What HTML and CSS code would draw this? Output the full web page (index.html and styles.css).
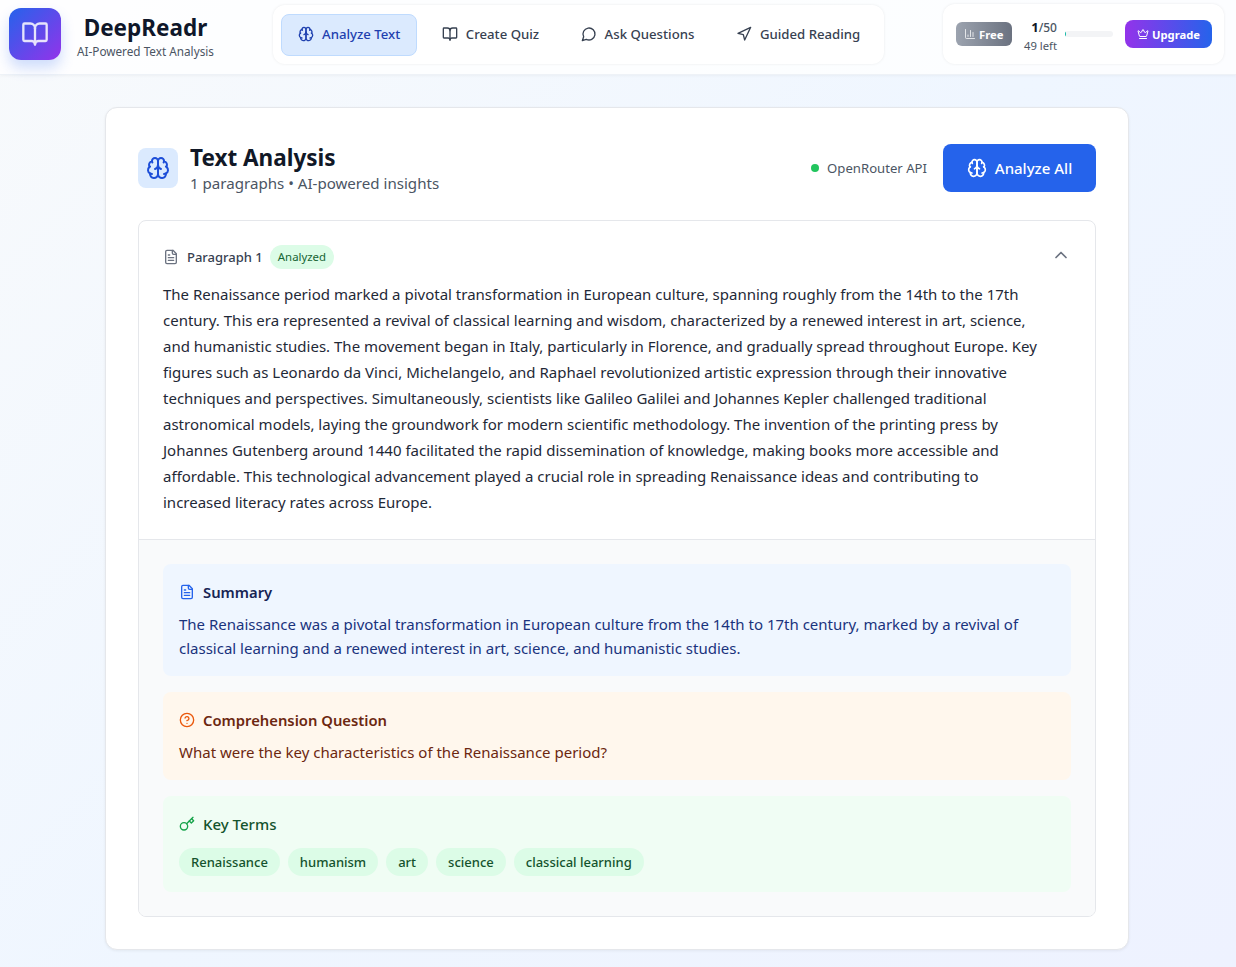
FILE: index.html
```html
<!DOCTYPE html>
<html lang="en">
<head>
	<meta charset="UTF-8">
	<meta name="viewport" content="width=device-width, initial-scale=1.0">
	<title>DeepReadr</title>
	<link rel="stylesheet" href="styles.css">
</head>
<body>
	<svg class="sprite" xmlns="http://www.w3.org/2000/svg">
		<symbol id="i-brain" viewBox="0 0 24 24"><path d="M12 5a3 3 0 1 0-5.997.125 4 4 0 0 0-2.526 5.77 4 4 0 0 0 .556 6.588A4 4 0 1 0 12 18Z"/><path d="M12 5a3 3 0 1 1 5.997.125 4 4 0 0 1 2.526 5.77 4 4 0 0 1-.556 6.588A4 4 0 1 1 12 18Z"/><path d="M15 13a4.5 4.5 0 0 1-3-4 4.5 4.5 0 0 1-3 4"/><path d="M17.599 6.5a3 3 0 0 0 .399-1.375"/><path d="M6.003 5.125A3 3 0 0 0 6.401 6.5"/><path d="M3.477 10.896a4 4 0 0 1 .585-.396"/><path d="M19.938 10.5a4 4 0 0 1 .585.396"/><path d="M6 18a4 4 0 0 1-1.967-.516"/><path d="M19.967 17.484A4 4 0 0 1 18 18"/></symbol>
		<symbol id="i-book" viewBox="0 0 24 24"><path d="M12 7v14"/><path d="M3 18a1 1 0 0 1-1-1V4a1 1 0 0 1 1-1h5a4 4 0 0 1 4 4 4 4 0 0 1 4-4h5a1 1 0 0 1 1 1v13a1 1 0 0 1-1 1h-6a3 3 0 0 0-3 3 3 3 0 0 0-3-3z"/></symbol>
		<symbol id="i-file" viewBox="0 0 24 24"><path d="M15 2H6a2 2 0 0 0-2 2v16a2 2 0 0 0 2 2h12a2 2 0 0 0 2-2V7Z"/><path d="M14 2v4a2 2 0 0 0 2 2h4"/><path d="M10 9H8"/><path d="M16 13H8"/><path d="M16 17H8"/></symbol>
	</svg>

	<header class="topbar">
		<div class="brand">
			<div class="brand-logo"><svg class="icon"><use href="#i-book"/></svg></div>
			<div class="brand-text">
				<div class="brand-name">DeepReadr</div>
				<div class="brand-sub">AI-Powered Text Analysis</div>
			</div>
		</div>

		<nav class="nav">
			<a class="nav-item active"><svg class="icon"><use href="#i-brain"/></svg>Analyze Text</a>
			<a class="nav-item"><svg class="icon"><use href="#i-book"/></svg>Create Quiz</a>
			<a class="nav-item"><svg class="icon" viewBox="0 0 24 24"><path d="M7.9 20A9 9 0 1 0 4 16.1L2 22Z"/></svg>Ask Questions</a>
			<a class="nav-item"><svg class="icon" viewBox="0 0 24 24"><polygon points="3 11 22 2 13 21 11 13 3 11"/></svg>Guided Reading</a>
		</nav>

		<div class="usage">
			<span class="plan"><svg class="icon" viewBox="0 0 24 24"><path d="M3 3v16a2 2 0 0 0 2 2h16"/><path d="M18 17V9"/><path d="M13 17V5"/><path d="M8 17v-3"/></svg>Free</span>
			<div class="usage-count">
				<div class="usage-num"><b>1</b>/50</div>
				<div class="usage-left">49 left</div>
			</div>
			<div class="usage-bar"><div class="usage-fill" style="width:2%"></div></div>
			<button class="upgrade"><svg class="icon" viewBox="0 0 24 24"><path d="M11.562 3.266a.5.5 0 0 1 .876 0L15.39 8.87a1 1 0 0 0 1.516.294L21.183 5.5a.5.5 0 0 1 .798.519l-2.834 10.246a1 1 0 0 1-.956.734H5.81a1 1 0 0 1-.957-.734L2.02 6.02a.5.5 0 0 1 .798-.519l4.276 3.664a1 1 0 0 0 1.516-.294z"/><path d="M5 21h14"/></svg>Upgrade</button>
		</div>
	</header>

	<main class="page">
		<section class="card">
			<div class="card-head">
				<div class="head-left">
					<div class="head-icon"><svg class="icon"><use href="#i-brain"/></svg></div>
					<div>
						<h1>Text Analysis</h1>
						<p class="head-sub">1 paragraphs • AI-powered insights</p>
					</div>
				</div>
				<div class="head-right">
					<span class="api"><i class="dot"></i>OpenRouter API</span>
					<button class="analyze-all"><svg class="icon"><use href="#i-brain"/></svg>Analyze All</button>
				</div>
			</div>

			<article class="para">
				<div class="para-main">
					<div class="para-head">
						<div class="para-title">
							<svg class="icon"><use href="#i-file"/></svg>
							<span class="para-label">Paragraph 1</span>
							<span class="badge">Analyzed</span>
						</div>
						<svg class="icon chevron" viewBox="0 0 24 24"><path d="m18 15-6-6-6 6"/></svg>
					</div>
					<p class="para-text">The Renaissance period marked a pivotal transformation in European culture, spanning roughly from the 14th to the 17th century. This era represented a revival of classical learning and wisdom, characterized by a renewed interest in art, science, and humanistic studies. The movement began in Italy, particularly in Florence, and gradually spread throughout Europe. Key figures such as Leonardo da Vinci, Michelangelo, and Raphael revolutionized artistic expression through their innovative techniques and perspectives. Simultaneously, scientists like Galileo Galilei and Johannes Kepler challenged traditional astronomical models, laying the groundwork for modern scientific methodology. The invention of the printing press by Johannes Gutenberg around 1440 facilitated the rapid dissemination of knowledge, making books more accessible and affordable. This technological advancement played a crucial role in spreading Renaissance ideas and contributing to increased literacy rates across Europe.</p>
				</div>

				<div class="para-results">
					<div class="result blue">
						<h3><svg class="icon"><use href="#i-file"/></svg>Summary</h3>
						<p>The Renaissance was a pivotal transformation in European culture from the 14th to 17th century, marked by a revival of classical learning and a renewed interest in art, science, and humanistic studies.</p>
					</div>
					<div class="result orange">
						<h3><svg class="icon" viewBox="0 0 24 24"><circle cx="12" cy="12" r="10"/><path d="M9.09 9a3 3 0 0 1 5.83 1c0 2-3 3-3 3"/><path d="M12 17h.01"/></svg>Comprehension Question</h3>
						<p>What were the key characteristics of the Renaissance period?</p>
					</div>
					<div class="result green">
						<h3><svg class="icon" viewBox="0 0 24 24"><circle cx="7.5" cy="15.5" r="5.5"/><path d="m21 2-9.6 9.6"/><path d="m15.5 7.5 3 3L22 7l-3-3"/></svg>Key Terms</h3>
						<div class="terms">
							<span class="term">Renaissance</span>
							<span class="term">humanism</span>
							<span class="term">art</span>
							<span class="term">science</span>
							<span class="term">classical learning</span>
						</div>
					</div>
				</div>
			</article>
		</section>
	</main>
</body>
</html>
```

FILE: styles.css
```css
* {
	box-sizing: border-box;
}

body {
	margin: 0;
	min-height: 967px;
	font-family: "Noto Sans", sans-serif;
	color: #111827;
	background: linear-gradient(135deg, #f8fafc 0%, #eff6ff 50%, #eef2ff 100%);
}

.sprite {
	display: none;
}

.icon {
	fill: none;
	stroke: currentColor;
	stroke-width: 2;
	stroke-linecap: round;
	stroke-linejoin: round;
	flex-shrink: 0;
	width: 16px;
	height: 16px;
}

/* top bar */
.topbar {
	height: 75px;
	display: flex;
	align-items: flex-start;
	background: rgba(255,255,255,0.8);
	border-bottom: 1px solid #eef2f7;
	box-shadow: 0 1px 3px rgba(0,0,0,0.04);
}

.brand {
	display: flex;
	align-items: center;
	width: 273px;
	padding: 8px 0 0 9px;
}

.brand-logo {
	width: 52px;
	height: 52px;
	border-radius: 12px;
	display: flex;
	align-items: center;
	justify-content: center;
	color: #fff;
	background: linear-gradient(135deg, #2563eb, #9333ea);
	box-shadow: 0 8px 14px rgba(37,99,235,0.22);
}

.brand-logo .icon {
	width: 28px;
	height: 28px;
	opacity: 0.85;
}

.brand-text {
	margin: 2px 0 0 16px;
	text-align: center;
	white-space: nowrap;
}

.brand-name {
	font-size: 22.5px;
	line-height: 30px;
	font-weight: 700;
	color: #0f172a;
}

.brand-sub {
	margin-top: 1px;
	font-size: 11.75px;
	line-height: 14px;
	color: #4b5563;
}

.nav {
	display: flex;
	align-items: center;
	width: 611px;
	height: 59px;
	margin-top: 5px;
	padding: 0 8px;
	background: #fff;
	border-radius: 12px;
	box-shadow: 0 0 3px rgba(0,0,0,0.08);
}

.nav-item {
	display: flex;
	align-items: center;
	gap: 8px;
	height: 42px;
	padding: 0 16px 1px;
	margin-right: 7.5px;
	font-size: 13.2px;
	font-weight: 500;
	color: #374151;
	white-space: nowrap;
	border: 1px solid transparent;
	border-radius: 8px;
}

.nav-item.active {
	color: #1e40af;
	background: #dbeafe;
	border-color: #bfdbfe;
}

.usage {
	display: flex;
	align-items: center;
	width: 281px;
	height: 60px;
	margin: 4px 0 0 59px;
	padding: 0 12px 0 13px;
	background: #fff;
	border-radius: 12px;
	box-shadow: 0 0 3px rgba(0,0,0,0.08);
}

.plan {
	display: flex;
	align-items: center;
	gap: 3px;
	width: 56px;
	height: 24px;
	padding-left: 8px;
	font-size: 11.25px;
	font-weight: 700;
	color: #fff;
	border-radius: 6px;
	background: linear-gradient(90deg, #9ca3af, #6b7280);
}

.plan .icon {
	width: 12px;
	height: 12px;
	stroke-width: 1.5;
}

.usage-count {
	width: 33px;
	margin: 4px 0 0 12px;
	text-align: right;
	font-size: 11.25px;
	line-height: 18px;
	color: #4b5563;
	white-space: nowrap;
}

.usage-num {
	font-size: 12px;
	font-weight: 500;
}

.usage-num b {
	color: #111827;
	font-size: 13px;
}

.usage-bar {
	width: 48px;
	height: 6px;
	margin-left: 8px;
	border-radius: 3px;
	background: #f3f4f6;
	overflow: hidden;
}

.usage-fill {
	height: 100%;
	background: #14b8a6;
}

.upgrade {
	display: flex;
	align-items: center;
	justify-content: center;
	gap: 3px;
	width: 87px;
	height: 28px;
	margin-left: 12px;
	padding: 0;
	font-family: inherit;
	font-size: 11.25px;
	font-weight: 700;
	color: #fff;
	border: 0;
	border-radius: 8px;
	background: linear-gradient(90deg, #9333ea, #2563eb);
}

.upgrade .icon {
	width: 12px;
	height: 12px;
}

/* main card */
.page {
	padding: 32px 107px 16px 105px;
}

.card {
	background: #fff;
	border: 1px solid #e5e7eb;
	border-radius: 12px;
	padding: 36px 32px 32px;
	box-shadow: 0 1px 3px rgba(0,0,0,0.06);
}

.card-head {
	display: flex;
	align-items: flex-start;
	justify-content: space-between;
	margin-bottom: 25px;
}

.head-left {
	display: flex;
	align-items: flex-start;
	gap: 12px;
}

.head-icon {
	width: 40px;
	height: 40px;
	margin-top: 4px;
	border-radius: 8px;
	display: flex;
	align-items: center;
	justify-content: center;
	color: #1d4ed8;
	background: #dbeafe;
}

.head-icon .icon {
	width: 24px;
	height: 24px;
}

h1 {
	margin: 0;
	font-size: 22.5px;
	line-height: 28px;
	font-weight: 700;
	color: #111827;
}

.head-sub {
	margin: -1px 0 0;
	font-size: 15.1px;
	line-height: 24px;
	color: #4b5563;
}

.head-right {
	display: flex;
	align-items: center;
	gap: 16px;
}

.api {
	display: flex;
	align-items: center;
	gap: 8px;
	font-size: 13.15px;
	color: #4b5563;
}

.dot {
	width: 8px;
	height: 8px;
	border-radius: 50%;
	background: #22c55e;
}

.analyze-all {
	display: flex;
	align-items: center;
	gap: 8px;
	width: 153px;
	height: 48px;
	justify-content: center;
	font-family: inherit;
	font-size: 15px;
	font-weight: 500;
	color: #fff;
	border: 0;
	border-radius: 8px;
	background: #2563eb;
}

.analyze-all .icon {
	width: 20px;
	height: 20px;
}

/* paragraph */
.para {
	border: 1px solid #e5e7eb;
	border-radius: 8px;
	overflow: hidden;
}

.para-main {
	padding: 24px;
}

.para-head {
	display: flex;
	justify-content: space-between;
	align-items: flex-start;
	margin-bottom: 12px;
}

.para-title {
	display: flex;
	align-items: center;
	height: 24px;
}

.para-title .icon {
	color: #6b7280;
}

.para-label {
	margin-left: 8px;
	font-size: 13px;
	font-weight: 500;
	color: #374151;
}

.badge {
	margin-left: 7px;
	padding: 0 8px;
	height: 24px;
	line-height: 24px;
	font-size: 11.4px;
	color: #166534;
	background: #dcfce7;
	border-radius: 12px;
}

.chevron {
	width: 20px;
	height: 20px;
	color: #6b7280;
}

.para-text {
	margin: 0;
	padding-right: 28px;
	font-size: 15px;
	line-height: 26px;
	color: #1f2937;
}

.para-results {
	padding: 24px;
	background: #f9fafb;
	border-top: 1px solid #e5e7eb;
	display: flex;
	flex-direction: column;
	gap: 16px;
}

.result {
	padding: 16px;
	border-radius: 8px;
}

.result h3 {
	display: flex;
	align-items: center;
	gap: 8px;
	margin: 0 0 8px;
	font-size: 14.8px;
	line-height: 24px;
	font-weight: 600;
}

.result p {
	margin: 0;
	font-size: 15px;
	line-height: 24px;
}

.blue { background: #eff6ff; }
.blue h3 { color: #172554; }
.blue h3 .icon { color: #2563eb; }
.blue p { color: #1a337d; }

.orange { background: #fff7ed; }
.orange h3 { color: #6c2710; }
.orange h3 .icon { color: #ea580c; }
.orange p { color: #6c2710; }

.green { background: #f0fdf4; }
.green h3 { color: #14532d; margin-bottom: 12px; font-size: 15px; font-weight: 500; }
.green h3 .icon { color: #16a34a; }

.terms {
	display: flex;
	gap: 8px;
}

.term {
	padding: 0 12px;
	height: 28px;
	line-height: 28px;
	font-size: 13px;
	font-weight: 500;
	color: #14532d;
	background: #dcfce7;
	border-radius: 14px;
}
```
